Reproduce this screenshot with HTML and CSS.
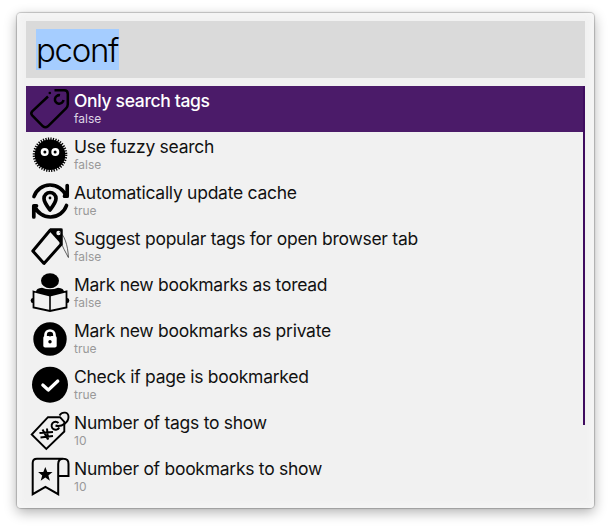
FILE: index.html
```html
<!DOCTYPE html>
<html lang="en">
<head>
<meta charset="utf-8">
<title>pconf</title>
<link rel="stylesheet" href="styles.css">
</head>
<body>
<main class="window">
  <div class="search"><span class="query">pconf</span></div>
  <div class="results">
    <ul class="list">
      <li class="row selected">
        <svg class="icon" viewBox="0 0 46 46"><g class="line" stroke-width="2.5"><path d="M22 10.5L6.2 25.300q-1.800 2 0 4l10.700 11q2.500 2 5 0L40 22.500q1.800-2 1.800-4.200V8q0-3.700-3.700-3.700H28.500"/><path d="M34 9.200A4.300 4.300 0 1 0 37.500 14"/></g><circle cx="23.800" cy="7" r="1.300"/></svg>
        <div class="text"><div class="title">Only search tags</div><div class="value">false</div></div>
      </li>
      <li class="row">
        <svg class="icon" viewBox="0 0 46 46"><circle cx="24" cy="22.700" r="15.300"/><circle class="line" cx="24" cy="22.700" r="16" stroke-width="2.600" stroke-dasharray="1.250 1.260"/><g fill="#fff"><circle cx="18.700" cy="20" r="4"/><circle cx="29.300" cy="20" r="4"/></g><circle cx="18.900" cy="20" r="1.500"/><circle cx="29.100" cy="20" r="1.500"/></svg>
        <div class="text"><div class="title">Use fuzzy search</div><div class="value">false</div></div>
      </li>
      <li class="row">
        <svg class="icon" viewBox="0 0 46 46"><g class="line" stroke-width="3.700" stroke-linecap="round" stroke-linejoin="round"><path d="M8 18.500A17 17 0 0 1 40 18M41.200 7.500V18.200H38.500"/><path d="M40.500 27.500A17 17 0 0 1 8.500 28M7.800 39V27.800H10.500"/><path d="M24 32c-3-4-6-7.800-6-11.500a6 6 0 0 1 12 0C30 24.200 27 28 24 32z"/></g><circle cx="24" cy="20" r="1.400"/></svg>
        <div class="text"><div class="title">Automatically update cache</div><div class="value">true</div></div>
      </li>
      <li class="row">
        <svg class="icon" viewBox="0 0 46 46"><path class="line" stroke-width="3" stroke-linejoin="round" d="M24.300 6H35V20.500L18 39.500 6.800 27z"/><path d="M24 4.500H36.500V21l-4-3.800-9-10z"/><circle cx="32.500" cy="9" r="2.200" fill="#f1f1f1"/><path class="line" stroke-width=".6" d="M33 8c5 2 9 13 9.400 25.500C39 27 36.500 23 35.500 19"/></svg>
        <div class="text"><div class="title">Suggest popular tags for open browser tab</div><div class="value">false</div></div>
      </li>
      <li class="row">
        <svg class="icon" viewBox="0 0 46 46"><ellipse cx="24" cy="10.700" rx="9" ry="7.500"/><path d="M10 22q0-4 6-4.300 8 3 16 0 6 .3 6 4.300L24 26.500z"/><ellipse cx="6.700" cy="30.500" rx="2" ry="2.500"/><ellipse cx="41.300" cy="30.500" rx="2" ry="2.500"/><path d="M7.500 21.500L24 25.500l16.500-4v16L24 41 7.500 37.500z" fill="#f1f1f1" stroke="#000" stroke-width="1.800"/><path class="line" stroke-width="1.600" d="M24 25.500V41"/></svg>
        <div class="text"><div class="title">Mark new bookmarks as toread</div><div class="value">false</div></div>
      </li>
      <li class="row">
        <svg class="icon" viewBox="0 0 46 46"><circle cx="24" cy="23" r="16.700"/><rect x="17.300" y="20" width="13.400" height="11.500" rx="1.800" fill="#fff"/><path d="M19.500 21v-2a4.500 4.500 0 0 1 9 0v2" fill="none" stroke="#fff" stroke-width="2.700"/><circle cx="24" cy="18.500" r="2"/><circle cx="24" cy="25.800" r="1.700"/></svg>
        <div class="text"><div class="title">Mark new bookmarks as private</div><div class="value">true</div></div>
      </li>
      <li class="row">
        <svg class="icon" viewBox="0 0 46 46"><circle cx="24" cy="22.700" r="18"/><path d="M16.800 23l5.500 5 9.500-9" fill="none" stroke="#fff" stroke-width="3.200" stroke-linecap="round" stroke-linejoin="round"/></svg>
        <div class="text"><div class="title">Check if page is bookmarked</div><div class="value">true</div></div>
      </li>
      <li class="row">
        <svg class="icon" viewBox="0 0 46 46"><g class="line" stroke-width="1.900"><path d="M22 9.200H34l4.300 4.600V23.500L20.300 41 5.700 26.500z"/><path d="M32.500 15A4 4 0 1 0 33.200 19.500"/><path d="M29.500 17.500C36 19.500 42.500 14 42.500 9c0-5-6-6-9-1.500"/><path stroke-width="2" d="M16.500 21.500l5.500 10M21 20.500l1 11M13.500 25l13.500-1M14.500 29.500l12.500-1.500"/></g></svg>
        <div class="text"><div class="title">Number of tags to show</div><div class="value">10</div></div>
      </li>
      <li class="row">
        <svg class="icon" viewBox="0 0 46 46"><path class="line" stroke-width="2" d="M37.500 4.700H11q-4.300 0-4.300 4.300V40.200l12.700-7.400L32.200 40.200V10q0-5.300 5.200-5.300T42.500 10V22H32.200"/><path d="M19.300 13l2 5h5.200l-4.100 3.400 1.500 5.300-4.600-3.200-4.600 3.200 1.500-5.300L12.100 18h5.200z"/></svg>
        <div class="text"><div class="title">Number of bookmarks to show</div><div class="value">10</div></div>
      </li>
    </ul>
    <div class="scrollbar"></div>
  </div>
</main>
</body>
</html>
```
FILE: styles.css
```css
* { box-sizing: border-box; }
body {
  margin: 0;
  height: 529px;
  padding: 13px 17px;
  overflow: hidden;
  background: #fff;
  font-family: Inter, "Liberation Sans", sans-serif;
}
.window {
  width: 577px;
  height: 495px;
  padding: 8px 9px;
  border-radius: 4px;
  background: #f1f1f1;
  box-shadow: inset 0 0 8px 1px #f8f8f8, 0 0 1px 1px rgba(0,0,0,.2), 0 4px 13px rgba(0,0,0,.32);
}
.search {
  height: 57px;
  padding: 8px 10px;
  margin-bottom: 8px;
  background: #dadada;
}
.query {
  display: block;
  width: 83px;
  height: 41px;
  background: #a5cdff;
  font-size: 33px;
  font-weight: 300;
  line-height: 42px;
  letter-spacing: -1.3px;
  white-space: nowrap;
}
.results { display: flex; }
.list {
  flex: 1;
  margin: 0;
  padding: 0;
  list-style: none;
}
.row {
  display: flex;
  gap: 2px;
  height: 46px;
}
.icon { width: 46px; height: 46px; flex: none; }
.line { fill: none; stroke: #000; }
.text { padding-top: 4px; white-space: nowrap; }
.title {
  height: 22px;
  font-size: 17.5px;
  line-height: 22px;
  letter-spacing: -.27px;
  color: #111;
}
.value {
  font-size: 12px;
  line-height: 14px;
  color: #999;
}
.selected { background: #4b1b69; }
.selected .title { color: #fff; font-weight: 500; letter-spacing: -.33px; }
.selected .value { color: #ded4e4; }
.scrollbar { width: 2px; height: 339px; background: #3f0c5f; }
```
